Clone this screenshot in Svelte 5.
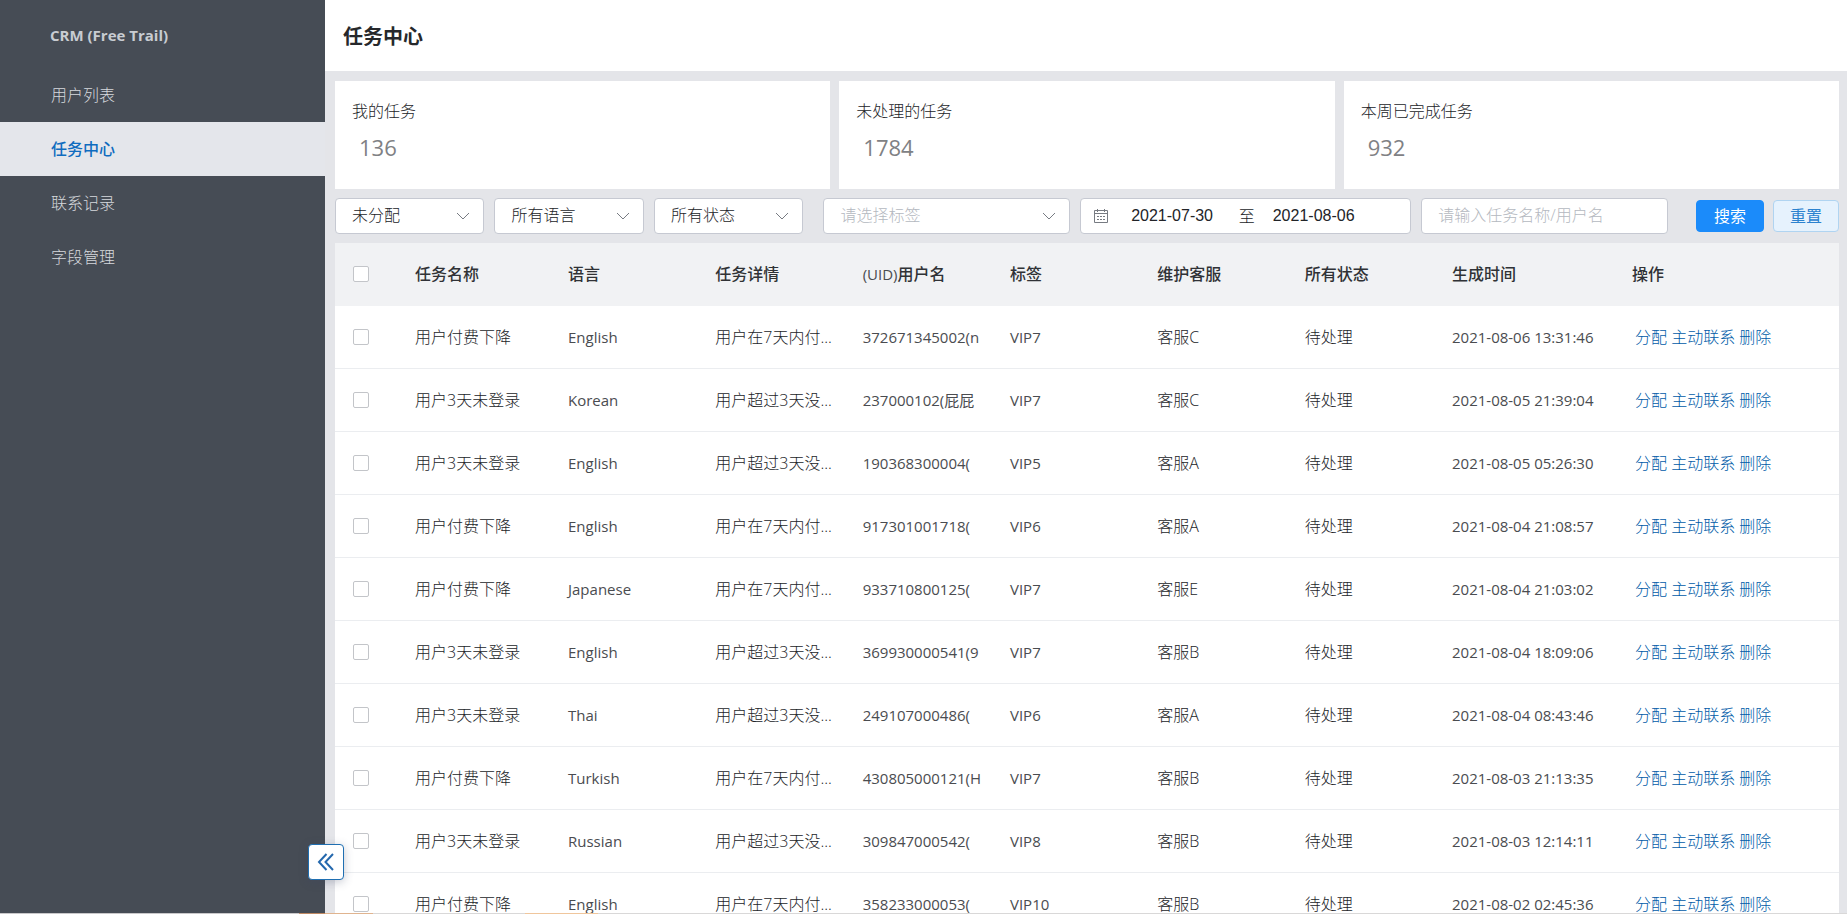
<script lang="ts">
  const menu = ["用户列表", "任务中心", "联系记录", "字段管理"];

  const stats = [
    { label: "我的任务", value: 136 },
    { label: "未处理的任务", value: 1784 },
    { label: "本周已完成任务", value: 932 },
  ];

  const drop = "用户付费下降";
  const absent = "用户3天未登录";
  const dropDetail = "用户在7天内付...";
  const absentDetail = "用户超过3天没...";

  const tasks = [
    { name: drop, lang: "English", detail: dropDetail, uid: "372671345002(n", tag: "VIP7", agent: "客服C", time: "2021-08-06 13:31:46" },
    { name: absent, lang: "Korean", detail: absentDetail, uid: "237000102(屁屁", tag: "VIP7", agent: "客服C", time: "2021-08-05 21:39:04" },
    { name: absent, lang: "English", detail: absentDetail, uid: "190368300004(", tag: "VIP5", agent: "客服A", time: "2021-08-05 05:26:30" },
    { name: drop, lang: "English", detail: dropDetail, uid: "917301001718(", tag: "VIP6", agent: "客服A", time: "2021-08-04 21:08:57" },
    { name: drop, lang: "Japanese", detail: dropDetail, uid: "933710800125(", tag: "VIP7", agent: "客服E", time: "2021-08-04 21:03:02" },
    { name: absent, lang: "English", detail: absentDetail, uid: "369930000541(9", tag: "VIP7", agent: "客服B", time: "2021-08-04 18:09:06" },
    { name: absent, lang: "Thai", detail: absentDetail, uid: "249107000486(", tag: "VIP6", agent: "客服A", time: "2021-08-04 08:43:46" },
    { name: drop, lang: "Turkish", detail: dropDetail, uid: "430805000121(H", tag: "VIP7", agent: "客服B", time: "2021-08-03 21:13:35" },
    { name: absent, lang: "Russian", detail: absentDetail, uid: "309847000542(", tag: "VIP8", agent: "客服B", time: "2021-08-03 12:14:11" },
    { name: drop, lang: "English", detail: dropDetail, uid: "358233000053(", tag: "VIP10", agent: "客服B", time: "2021-08-02 02:45:36" },
  ];

  let active = $state("任务中心");
  let selected = $state(tasks.map(() => false));
  let startDate = $state("2021-07-30");
  let endDate = $state("2021-08-06");
  let keyword = $state("");

  function toggleAll(event: Event) {
    const checked = (event.target as HTMLInputElement).checked;
    selected = tasks.map(() => checked);
  }

  function reset() {
    keyword = "";
    startDate = "2021-07-30";
    endDate = "2021-08-06";
  }
</script>

{#snippet picker(label: string, text: string, kind: string)}
  <div class="select {kind}">
    <select aria-label={label}>
      <option>{text}</option>
    </select>
    <svg viewBox="0 0 14 14" width="14" height="14" aria-hidden="true">
      <path d="M1 4l6 6 6-6" />
    </svg>
  </div>
{/snippet}

<div class="layout">
  <aside class="sidebar">
    <div class="brand">CRM (Free Trail)</div>
    <nav>
      {#each menu as item}
        <a href="#{item}" class:active={item === active} onclick={() => (active = item)}>{item}</a>
      {/each}
    </nav>
    <button class="collapse" aria-label="收起菜单">
      <svg viewBox="0 0 18 18" width="18" height="18" aria-hidden="true">
        <path d="M9.5 1L2 9l7.5 8M16 1L8.5 9l7.5 8" />
      </svg>
    </button>
  </aside>

  <main>
    <header>
      <h1>任务中心</h1>
    </header>

    <div class="content">
      <section class="stats">
        {#each stats as stat}
          <div class="card">
            <div class="label">{stat.label}</div>
            <div class="value">{stat.value}</div>
          </div>
        {/each}
      </section>

      <form class="filters" onsubmit={(event) => event.preventDefault()}>
        {@render picker("分配", "未分配", "short")}
        {@render picker("语言", "所有语言", "short")}
        {@render picker("状态", "所有状态", "short")}
        {@render picker("标签", "请选择标签", "tags")}
        <div class="range">
          <svg viewBox="0 0 16 16" width="16" height="16" aria-hidden="true">
            <path d="M1.5 2.5h13v12h-13zM1.5 5.5h13M4.5 1v3M11.5 1v3" />
            <path d="M4 8.5h2M7 8.5h2M10 8.5h2M4 11.5h2M7 11.5h2M10 11.5h2" />
          </svg>
          <input type="text" aria-label="开始日期" bind:value={startDate} />
          <span>至</span>
          <input type="text" aria-label="结束日期" bind:value={endDate} />
        </div>
        <input
          class="keyword"
          type="text"
          aria-label="任务名称/用户名"
          placeholder="请输入任务名称/用户名"
          bind:value={keyword}
        />
        <div class="buttons">
          <button type="submit" class="primary">搜索</button>
          <button type="button" class="plain" onclick={reset}>重置</button>
        </div>
      </form>

      <table>
        <colgroup>
          <col class="col-check" />
          <col class="col-name" />
          <col span="6" />
          <col class="col-time" />
          <col class="col-actions" />
        </colgroup>
        <thead>
          <tr>
            <th><input type="checkbox" aria-label="全选" onchange={toggleAll} /></th>
            <th>任务名称</th>
            <th>语言</th>
            <th>任务详情</th>
            <th><span class="latin">(UID)</span>用户名</th>
            <th>标签</th>
            <th>维护客服</th>
            <th>所有状态</th>
            <th>生成时间</th>
            <th>操作</th>
          </tr>
        </thead>
        <tbody>
          {#each tasks as task, i}
            <tr>
              <td><input type="checkbox" aria-label={task.uid} bind:checked={selected[i]} /></td>
              <td>{task.name}</td>
              <td class="latin">{task.lang}</td>
              <td>{task.detail}</td>
              <td class="latin">{task.uid}</td>
              <td class="latin">{task.tag}</td>
              <td>{task.agent}</td>
              <td>待处理</td>
              <td class="latin">{task.time}</td>
              <td class="actions">
                <a href="#assign">分配</a>
                <a href="#contact">主动联系</a>
                <a href="#delete">删除</a>
              </td>
            </tr>
          {/each}
        </tbody>
      </table>
    </div>
  </main>
  <div class="edge"></div>
</div>

<style>
  :global(body) {
    margin: 0;
  }

  .layout {
    position: relative;
    display: flex;
    height: 100vh;
    overflow: hidden;
    background: #e4e5e9;
    color: #222428;
    font-family: "Open Sans", "Noto Sans CJK SC", sans-serif;
    font-size: 16px;
    line-height: 24px;
  }

  .layout * {
    box-sizing: border-box;
  }

  button,
  input,
  select {
    margin: 0;
    font: inherit;
    color: inherit;
  }

  .sidebar {
    position: relative;
    flex: none;
    width: 325px;
    background: #464c55;
    color: #d6d9dd;
  }

  .brand {
    padding: 23px 50px 21px;
    color: #c8ccd2;
    font-size: 15px;
    font-weight: 700;
  }

  nav a {
    display: block;
    padding: 15px 51px;
    color: inherit;
    font-weight: 300;
    text-decoration: none;
  }

  nav a.active {
    background: #e4e6eb;
    color: #0f6cbf;
    font-weight: 500;
  }

  .collapse {
    position: absolute;
    right: -19px;
    bottom: 34px;
    z-index: 1;
    display: grid;
    place-items: center;
    width: 36px;
    height: 36px;
    padding: 0;
    border: 1px solid #1f6fb2;
    border-radius: 4px;
    background: #fff;
    box-shadow: 0 2px 10px rgba(60, 70, 100, 0.3);
    cursor: pointer;
  }

  .collapse svg {
    fill: none;
    stroke: #2468ad;
    stroke-width: 2;
  }

  main {
    flex: 1;
    min-width: 0;
    overflow-y: auto;
    scrollbar-width: none;
  }

  header {
    padding: 22px 18px 19px;
    background: #fff;
  }

  h1 {
    margin: 0;
    color: #26282b;
    font-size: 20px;
    font-weight: 700;
    line-height: 30px;
  }

  .content {
    padding: 10px 8px 0 10px;
  }

  .stats {
    display: grid;
    grid-template-columns: repeat(3, 1fr);
    gap: 9px;
  }

  .card {
    height: 108px;
    padding: 18px 17px;
    background: #fff;
  }

  .label {
    font-weight: 300;
  }

  .value {
    padding: 8px 7px 0;
    color: #7f8184;
    font-size: 22px;
    line-height: 32px;
  }

  .filters {
    display: grid;
    grid-template-columns: 149fr 149fr 149fr 256fr 330fr 246fr auto;
    align-items: center;
    gap: 10px;
    padding: 9px 0;
    font-weight: 300;
  }

  .select {
    display: grid;
    grid-template-columns: 1fr 28px;
    align-items: center;
  }

  .tags {
    margin-left: 10px;
  }

  .select select,
  .range,
  .keyword {
    height: 36px;
    border: 1px solid #c6c9d2;
    border-radius: 4px;
    background: #fff;
  }

  .select select {
    grid-area: 1 / 1 / 2 / 3;
    width: 100%;
    padding: 0 34px 2px 16px;
    appearance: none;
  }

  .tags select {
    color: #b4b8c0;
  }

  .select svg {
    grid-area: 1 / 2;
    pointer-events: none;
  }

  .select svg,
  .range svg {
    fill: none;
    stroke: #777b82;
  }

  .range {
    display: grid;
    grid-template-columns: 16px 5fr 16px 6fr;
    align-items: center;
    padding-left: 12px;
  }

  .range input {
    width: 100%;
    padding: 0 0 0 22px;
    border: 0;
    background: none;
    font-family: "Liberation Sans", Arial, sans-serif;
  }

  .range span + input {
    padding-left: 18px;
  }

  .keyword {
    width: 100%;
    padding: 0 16px 2px;
  }

  .keyword::placeholder {
    color: #b4b8c0;
    opacity: 1;
  }

  .buttons {
    display: flex;
    gap: 9px;
    margin-left: 18px;
  }

  .buttons button {
    height: 32px;
    padding: 0 17px;
    border: 1px solid #1b8bfa;
    border-radius: 4px;
    cursor: pointer;
  }

  .buttons .primary {
    background: #1b8bfa;
    color: #fff;
    font-weight: 400;
  }

  .buttons .plain {
    padding: 0 16px;
    border-color: #b0d4f1;
    background: #e6f2fd;
    color: #2b82cf;
    font-weight: 400;
  }

  table {
    width: 100%;
    table-layout: fixed;
    border-spacing: 0;
    background: #fff;
  }

  .col-check {
    width: 68px;
  }

  .col-name {
    width: 153px;
  }

  .col-time {
    width: 180px;
  }

  .col-actions {
    width: 219px;
  }

  th,
  td {
    height: 63px;
    padding: 0 0 0 12px;
    overflow: hidden;
    border-bottom: 1px solid #ebedf0;
    text-align: left;
    white-space: nowrap;
  }

  th {
    border-color: #f1f2f4;
    background: #f1f2f4;
    color: #303236;
    font-weight: 500;
  }

  td {
    font-weight: 300;
  }

  th:first-child,
  td:first-child {
    padding-left: 18px;
  }

  .latin {
    color: #4a4c50;
    font-size: 15px;
    font-weight: 400;
  }

  input[type="checkbox"] {
    display: block;
    width: 16px;
    height: 16px;
    border: 1px solid #c3c5c9;
    border-radius: 2px;
    background: #fff;
    appearance: none;
  }

  input[type="checkbox"]:checked {
    border-color: #1b8bfa;
    background: #1b8bfa;
  }

  td.actions {
    padding-left: 15px;
  }

  .actions a {
    color: #005ba8;
    text-decoration: none;
  }

  .edge {
    position: absolute;
    right: 0;
    bottom: 0;
    left: 0;
    height: 1px;
    background: linear-gradient(
      90deg,
      #c9c8ca 299px,
      #c08a64 299px 325px,
      #e0b48f 325px 373px,
      #d9d8d8 373px 525px,
      #f0c69c 525px 598px,
      #d9d8d8 598px
    );
  }
</style>
